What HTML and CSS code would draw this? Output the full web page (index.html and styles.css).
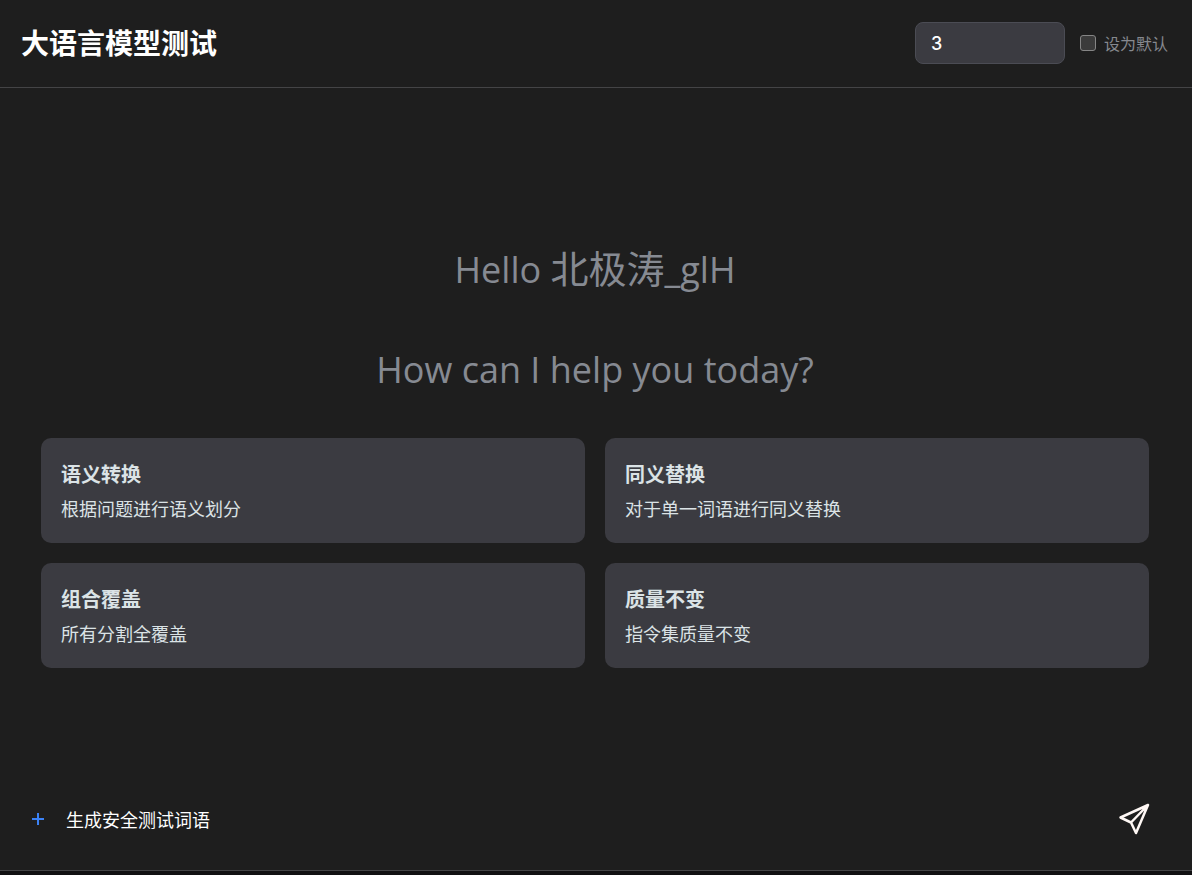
FILE: index.html
```html
<!DOCTYPE html>
<html lang="zh-CN">
<head>
<meta charset="utf-8">
<meta name="viewport" content="width=device-width, initial-scale=1">
<title>大语言模型测试</title>
<link rel="stylesheet" href="styles.css">
</head>
<body class="page">
<div class="app">
  <header class="header">
    <h1 class="title">大语言模型测试</h1>
    <div class="settings">
      <input class="count" type="text" value="3" aria-label="数量">
      <label class="default"><input class="check" type="checkbox"><span>设为默认</span></label>
    </div>
  </header>
  <main class="main">
    <p class="greeting">Hello <span class="name">北极涛</span>_glH</p>
    <p class="greeting">How can I help you today?</p>
    <div class="cards">
      <section class="card"><h2 class="card-title">语义转换</h2><p class="card-text">根据问题进行语义划分</p></section>
      <section class="card"><h2 class="card-title">同义替换</h2><p class="card-text">对于单一词语进行同义替换</p></section>
      <section class="card"><h2 class="card-title">组合覆盖</h2><p class="card-text">所有分割全覆盖</p></section>
      <section class="card"><h2 class="card-title">质量不变</h2><p class="card-text">指令集质量不变</p></section>
    </div>
  </main>
  <form class="composer">
    <button class="add" type="button" aria-label="添加">
      <svg width="12" height="12" viewBox="0 0 12 12"><path d="M6 0v12M0 6h12" stroke="#3b82f6" stroke-width="2"/></svg>
    </button>
    <input class="prompt" type="text" value="生成安全测试词语" aria-label="消息">
    <button class="send" type="button" aria-label="发送">
      <svg width="32" height="32" viewBox="0 0 32 32" fill="none" stroke="#fff8f5" stroke-width="2.5" stroke-linejoin="round"><path d="M30 2 2.500 14.500 13 19.500 18 30ZM30 2 13 19.500"/></svg>
    </button>
  </form>
</div>
</body>
</html>
```
FILE: styles.css
```css
* { box-sizing: border-box; margin: 0; }
.page {
  background: #111012;
  color: #fff;
  font-family: "Noto Sans CJK SC", sans-serif;
}
.app {
  display: flex;
  flex-direction: column;
  min-height: calc(100vh - 4px);
  background: #1e1e1e;
  border-bottom: 1px solid #444446;
}
.header {
  display: flex;
  align-items: center;
  justify-content: space-between;
  padding: 22px 24px 23px 21px;
  border-bottom: 1px solid #444446;
}
.title { padding-bottom: 2px; font-size: 28px; line-height: 40px; font-weight: 700; }
.settings { display: flex; align-items: center; gap: 15px; }
.count {
  width: 150px;
  height: 42px;
  padding: 0 15px;
  border: 1px solid #4b4c54;
  border-radius: 8px;
  background: #3b3b41;
  color: #fff;
  font: 500 18px Inter, sans-serif;
}
.default {
  display: flex;
  align-items: center;
  gap: 8px;
  color: #86898f;
  font-size: 16px;
  line-height: 24px;
}
.check {
  appearance: none;
  width: 16px;
  height: 16px;
  border: 1px solid #858585;
  border-radius: 3px;
  background: #3b3b3b;
}
.check:checked { background: #3b82f6; }
.main {
  flex: 1;
  display: flex;
  flex-direction: column;
  justify-content: center;
  padding: 55px 43px 0 41px;
}
.greeting {
  margin-bottom: 50px;
  color: #868a92;
  font-family: "Open Sans", "Noto Sans CJK SC", sans-serif;
  font-size: 36px;
  line-height: 50px;
  text-align: center;
}
.greeting + .greeting { margin-bottom: 43px; }
.name { font-size: 38px; line-height: 1; }
.cards { display: grid; grid-template-columns: 1fr 1fr; gap: 20px; }
.card {
  padding: 21px 20px 20px;
  border-radius: 10px;
  background: #3b3b41;
  color: #dbe3e6;
}
.card-title { margin-bottom: 4px; font-size: 20px; line-height: 30px; font-weight: 700; }
.card-text { font-size: 18px; line-height: 30px; }
.composer {
  display: flex;
  align-items: center;
  gap: 12px;
  padding: 19px 34px 21px 22px;
  height: 100px;
}
.add, .send {
  display: flex;
  align-items: center;
  justify-content: center;
  padding: 0;
  border: 0;
  background: none;
  cursor: pointer;
}
.add { width: 32px; height: 32px; }
.send { width: 48px; height: 48px; }
.prompt {
  flex: 1;
  min-width: 0;
  padding: 0;
  border: 0;
  outline: 0;
  background: none;
  color: #fff;
  font: 18px "Noto Sans CJK SC", sans-serif;
}
```
